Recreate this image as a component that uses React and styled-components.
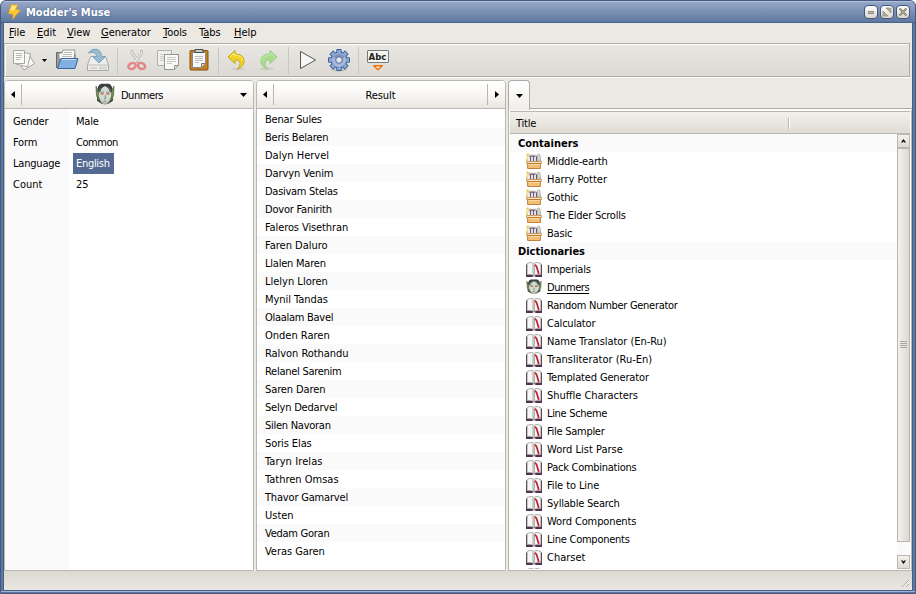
import React from 'react';
import styled, { createGlobalStyle, css } from 'styled-components';

const Global = createGlobalStyle`
  * { box-sizing: border-box; }
  html, body { margin: 0; padding: 0; overflow: hidden; background: #fff; }
  body { font-family: "DejaVu Sans Condensed", "DejaVu Sans", sans-serif; font-stretch: condensed; font-size: 11px; color: #000; cursor: default; }
  svg { display: block; flex: none; }
`;

const Window = styled.div`
  width: 916px; height: 594px; display: flex; flex-direction: column;
  border: 1px solid #465a80; border-radius: 6px 6px 0 0; overflow: hidden;
  background: #5f789f;
`;
const TitleBar = styled.header`
  height: 22px; flex: none; display: flex; align-items: center;
  padding: 0 5px 0 5px; border-top: 1px solid #b4c1da; border-bottom: 1px solid #46618b;
  background: linear-gradient(#96a6c7, #5e789f);
`;
const TitleText = styled.h1`
  flex: 1; margin: 2px 0 0 4px; font-size: 11px; line-height: 18px; font-weight: bold; color: #fff;
  text-shadow: 0 0 2px #435a82;
`;
const WindowButtons = styled.div`display: flex; gap: 2px;`;
const WindowButton = styled.button`
  width: 14px; height: 14px; padding: 0; display: grid; place-items: center;
  border: 1px solid #405780; border-radius: 4px; background: linear-gradient(#fff, #d8d5cd);
`;
const Client = styled.main`
  flex: 1; min-height: 0; margin: 0 3px; display: flex; flex-direction: column;
  background: #ece9e2; box-shadow: 0 0 0 1px #46618b;
`;
const Bottom = styled.div`height: 2px; flex: none; margin-top: 1px; background: linear-gradient(#9fb4d3 0 1px, #5a749c 1px);`;
const MenuBar = styled.nav`height: 20px; flex: none; display: flex; padding-left: 5px;`;
const MenuItem = styled.span`
  width: ${p => p.$w}px; line-height: 19px; white-space: nowrap; letter-spacing: -0.05px;
  u { text-underline-offset: 1px; text-decoration-thickness: 1px; }
`;
const ToolBar = styled.div`
  height: 34px; flex: none; display: flex; align-items: center; padding-left: 6px;
  border: 1px solid #aeaba4; border-left-color: #c8c5be; box-shadow: inset 1px 1px #fff, 0 1px #fff;
  margin-right: 2px; background: linear-gradient(#e9e7e2, #dddad4);
`;
const Tool = styled.div`width: ${p => p.$w || 31}px; height: 26px; flex: none; display: grid; place-items: center; opacity: ${p => (p.$dim ? 0.55 : 1)};`;
const Separator = styled.i`width: 1px; height: 27px; background: #cac7c0; margin: 0 ${p => p.$r ?? 3}px 0 4px;`;
const Workspace = styled.section`flex: 1; min-height: 0; margin-top: 3px; display: flex; gap: 2px;`;
const Panel = styled.section`
  width: 250px; display: flex; flex-direction: column; background: #fff;
  border: 1px solid #bab7b0; border-radius: 4px 4px 0 0; overflow: hidden;
`;
const PanelHeader = styled.header`
  height: 28px; flex: none; display: flex; align-items: center;
  border-bottom: 1px solid #bab7b0; background: linear-gradient(#fff, #fbfaf8 40%, #eae6e1);
`;
const ArrowCell = styled.div`
  width: ${p => p.$w || 17}px; height: 21px; display: grid; place-items: center;
  ${p => p.$side && css`border-${p.$side}: 1px solid #bab7b0;`}
`;
const HeaderTitle = styled.div`
  flex: 1; display: flex; align-items: center; justify-content: center; gap: 6px; line-height: 18px;
  padding-left: ${p => p.$pad || 0}px; letter-spacing: ${p => p.$ls || 0}px;
  span { padding-top: 2px; }
`;
const Properties = styled.dl`margin: 0; flex: 1; display: grid; grid-template: repeat(4, 21px) 1fr / 64px 1fr; align-items: stretch; padding-top: 2px; background: linear-gradient(90deg, #fafafa 64px, #fff 64px);`;
const Name = styled.dt`padding-left: 8px; line-height: 22px; letter-spacing: ${p => p.$ls || 0}px;`;
const Value = styled.dd`
  margin: 0 0 0 4px; padding: 0 3px; line-height: 22px; justify-self: start; letter-spacing: ${p => p.$ls || 0}px;
  ${p => p.$selected && css`background: #546a92; color: #fff; width: 41px;`}
`;
const List = styled.ul`margin: 0; padding: 1px 0 0; list-style: none; flex: 1;`;
const ResultRow = styled.li`height: 18px; line-height: 20px; padding-left: 8px; letter-spacing: ${p => p.$ls || 0}px; &:nth-child(even) { background: #fafafa; }`;
const RightPanel = styled.section`flex: 1; min-width: 0; display: flex; flex-direction: column;`;
const Tabs = styled.div`height: 30px; flex: none; display: flex;`;
const Tab = styled.div`
  width: 22px; height: 30px; display: grid; place-items: center; padding-top: 1px;
  border: 1px solid #aeaba4; border-bottom: 0; border-radius: 4px 4px 0 0; background: linear-gradient(#fff, #f0eeea);
`;
const TabLine = styled.div`flex: 1; height: 29px; border-bottom: 1px solid #aeaba4; box-shadow: 0 1px #fff;`;
const TreeFrame = styled.div`
  flex: 1; min-height: 0; display: flex; flex-direction: column; padding: 1px 1px 0 1px;
  border: solid #bab7b0; border-width: 0 1px 1px 1px; background: #fbfaf8;
`;
const TreeHeader = styled.header`
  height: 23px; flex: none; border: solid #bab7b0; border-width: 1px 0; padding: 1px 0 0 6px; line-height: 22px;
  background: linear-gradient(#f3f0eb, #e0dbd4); display: flex; align-items: center;
  span { width: 272px; padding-top: 2px; letter-spacing: -0.2px; }
  i { width: 2px; height: 11px; background: linear-gradient(90deg, #bab7b0 50%, #fff 50%); }
`;
const TreeBody = styled.div`flex: 1; min-height: 0; display: flex; background: #fff;`;
const Tree = styled.ul`flex: 1; margin: 0; padding: 0; list-style: none; overflow: hidden; height: 435px;`;
const Group = styled.li`height: 18px; line-height: 20px; padding-left: 8px; font-weight: bold; background: #fafafa;`;
const Item = styled.li`
  height: 18px; line-height: 18px; padding-left: 16px; display: flex; align-items: flex-start; gap: 5px; letter-spacing: ${p => p.$ls || 0}px;
  svg { margin-top: ${p => p.$top ?? 2}px; }
  span { line-height: 20px; text-decoration: ${p => (p.$active ? 'underline' : 'none')}; text-underline-offset: 2px; white-space: nowrap; }
`;
const ScrollBar = styled.div`width: 13px; height: 435px; display: flex; flex-direction: column; background: #fafafa;`;
const ScrollButton = styled.div`height: 14px; flex: none; border: 1px solid #bab7b0; display: grid; place-items: center; background: linear-gradient(#f4f1ed, #ded9d4);`;
const Thumb = styled.div`height: 394px; flex: none; border: 1px solid #bab7b0; display: grid; place-items: center; background: linear-gradient(90deg, #f4f1ed, #dcd8d2);`;
const Track = styled.div`flex: 1;`;
const Status = styled.footer`height: 19px; flex: none; display: flex; align-items: end; justify-content: end; padding: 0 3px 3px; background: linear-gradient(#dcd9d3, #eae7e1);`;

const Arrow = ({ dir }) => {
  const pts = { left: '4,0 0,3.5 4,7', right: '0,0 4,3.5 0,7', down: '0,0 7,0 3.5,4' }[dir];
  const down = dir === 'down';
  return <svg width={down ? 7 : 4} height={down ? 4 : 7}><polygon points={pts} /></svg>;
};

const Bolt = () => (
  <svg width="16" height="18" viewBox="0 0 16 18">
    <path d="M5 1.500 12 2 9.500 6.500 14.500 7 6.500 16.500 7.200 11.500 2.500 10.500Z" fill="#ffc72f" stroke="#e29a28" strokeWidth=".7" />
    <path d="M5.800 2.500 11 2.700 8.500 7 4 8Z" fill="#ffe57d" />
  </svg>
);
const Documents = () => (
  <svg width="24" height="24" viewBox="0 0 24 24">
    <g fill="#f8f8f6" stroke="#a5a5a2">
      <path d="m17 7 5.500 8.500L12 22 6 13Z" />
      <path d="m11 4 7.500 2-3 13L4 16Z" />
      <path d="M1.500 2.500h11v13h-11Z" />
    </g>
    <path d="M4 5.500h6M4 7.500h6M4 9.500h6M4 11.500h4" stroke="#bbb" />
  </svg>
);
const FolderOpen = () => (
  <svg width="24" height="24" viewBox="0 0 24 24">
    <path d="M1.500 20V4.500h5L8 6h12v13" fill="#989a96" stroke="#666965" />
    <path d="M4 5h3l1-3h12l-1 9H4Z" fill="#f8f8f6" stroke="#969693" />
    <path d="M9 4.500h8M8 6.500h9M7 8.500h10" stroke="#bbb" />
    <path d="M6 10.500h17L20 20.500H2.500Z" fill="#82afe0" stroke="#3868a4" />
    <path d="M7 11.500h14" stroke="#c7dcf2" />
  </svg>
);
const SaveDrive = () => (
  <svg width="24" height="24" viewBox="0 0 24 24">
    <path d="M4.500 8.500h15l3 8.500v5.500h-21V17Z" fill="#ededeb" stroke="#aaa9a6" />
    <path d="M2 17h20M4 20h7M14 18.500v3M16 18.500v3M18 18.500v3M20 18.500v3" stroke="#bcbcb9" />
    <path d="M2.500 5c3-5 13-6 13 3.500h4L13 15 6.500 8.500h4c0-4-3-5-8-3.500Z" fill="#99bbd1" stroke="#7ba0b9" />
  </svg>
);
const Scissors = () => (
  <svg width="22" height="22" viewBox="0 0 22 22" fill="none">
    <path d="M6 1v3l8 11M15.500 1v3L8 15" stroke="#9c9c99" strokeWidth="3" />
    <path d="M6 2v2l8 10M15.500 2v2L8 14" stroke="#f6f6f4" strokeWidth="1.200" />
    <ellipse cx="6" cy="17" rx="3.800" ry="2.800" stroke="#ea3c42" strokeWidth="2.400" transform="rotate(-25 6 17)" />
    <ellipse cx="15.500" cy="17" rx="3.800" ry="2.800" stroke="#ea3c42" strokeWidth="2.400" transform="rotate(25 15.500 17)" />
  </svg>
);
const Copy = () => (
  <svg width="24" height="24" viewBox="0 0 24 24">
    <path d="M1.500 2.500h14v15h-14Z" fill="#efefed" stroke="#b0b0ad" />
    <path d="M4 6.500h9M4 8.500h9M4 10.500h9M4 12.500h9" stroke="#ccc" />
    <path d="M8.500 6.500h14v11l-4 4h-10Z" fill="#fafaf9" stroke="#93938f" />
    <path d="M11 9.500h9M11 11.500h9M11 13.500h9M11 15.500h5" stroke="#c5c5c2" /><path d="m18.500 21v-3.500H22" fill="#ddd" stroke="#93938f" />
  </svg>
);
const Paste = () => (
  <svg width="22" height="24" viewBox="0 0 22 24">
    <rect x="2" y="2.500" width="18" height="19.500" rx="1" fill="#c38125" stroke="#845215" />
    <path d="M4.500 4.500h13v11l-4 4h-9Z" fill="#fafafa" stroke="#888" />
    <path d="M7 1.500h8v3H7Z" fill="#ccc" stroke="#44494a" />
    <path d="M7 8.500h8M7 10.500h8M7 12.500h8M7 14.500h4" stroke="#bbb" />
    <path d="M13.500 19v-3.500H17" fill="#ddd" stroke="#777" />
  </svg>
);
const Undo = ({ redo }) => (
  <svg width="22" height="22" viewBox="0 0 22 22">
    <g transform={redo ? 'translate(22 0) scale(-1 1)' : undefined}>
      <ellipse cx="12" cy="20" rx="7" ry="1.500" fill="#777" opacity=".16" />
      <path d="M9 1.500 2 8 9 14.500V11c5-1 7 4 2.500 9C20.500 17 21 5 9 5Z" fill={redo ? '#a9de8c' : '#f0d323'} stroke={redo ? '#92ce86' : '#c4a51a'} />
      <path d="M4 8 8 4v2c5 0 9 2 9 6" fill="none" stroke={redo ? '#c2ecad' : '#fff083'} />
    </g>
  </svg>
);
const Play = () => (
  <svg width="18" height="20" viewBox="0 0 18 20"><path d="M1.500 1.500 16.500 10l-15 8.500Z" fill="#f7f7f6" stroke="#555753" /></svg>
);
const teeth = [0, 45, 90, 135, 180, 225, 270, 315];
const Gear = () => (
  <svg width="24" height="24" viewBox="0 0 24 24">
    <ellipse cx="12" cy="21.500" rx="8" ry="2" fill="#555" opacity=".2" />
    <g fill="#8ea5d0" stroke="#35609f">
      {teeth.map(a => <path key={a} d="M9.800 5V1.500h4.400V5" transform={`rotate(${a} 12 12)`} />)}
      <circle cx="12" cy="12" r="8" />
    </g>
    {teeth.map(a => <path key={a} d="M10.300 5.500V2h3.400v3.500" fill="#8ea5d0" transform={`rotate(${a} 12 12)`} />)}
    <circle cx="12" cy="12" r="6" fill="#a9b3d8" stroke="#bac3e0" />
    <path d="M6 9q6-7 12 0L12 12Z" fill="#657ba9" opacity=".6" />
    <circle cx="12" cy="12" r="3.300" fill="#e5e5e4" stroke="#456da6" />
  </svg>
);
const AbcLabel = styled.div`
  width: 22px; height: 13px; border: 1px solid #787a76; border-radius: 1px; background: #f4f4f2;
  color: #222; font: bold 9.500px/11px "DejaVu Sans Condensed", "DejaVu Sans", sans-serif; font-stretch: condensed; text-align: center;
`;
const AbcIcon = styled.div`display: flex; flex-direction: column; align-items: center; gap: 2px;`;
const Abc = () => (
  <AbcIcon><AbcLabel>Abc</AbcLabel><svg width="10" height="6"><path d="M.8.800h8.400L5 4.800Z" fill="#fff1d8" stroke="#eb7411" strokeWidth="1.400" /></svg></AbcIcon>
);
const Face = ({ size = 20, h = 23 }) => (
  <svg width={size} height={h} viewBox="0 0 20 22" preserveAspectRatio="none">
    <path d="M2 17C3 9 1 3 6 .700h8C19 3 17 9 18 17l-5 3H7Z" fill="#393d40" />
    <path d="M1 3 4 9v9L1.500 12ZM19 3l-3 6v9l2.500-6Z" fill="#768b54" stroke="#456331" strokeWidth=".7" />
    <path d="M10 2.500C5 4 3.500 7 3.800 12c.5 4 3 8 6.200 9 3.200-1 5.700-5 6.200-9 .3-5-1.200-8-6.200-9.500Z" fill="#d2dbcf" />
    <path d="M4 15c1 3 3 5.500 6 6 3-.5 5-3 6-6l-4 3.500H8Z" fill="#94a28d" opacity=".6" />
    <path d="M10 2.500Q5.500 4 4.500 9M10 2.500Q14.500 4 15.500 9" stroke="#393d40" fill="none" />
    <path d="M5.500 8.800q2-.6 3.500.2M11 9q1.500-.8 3.500-.2" stroke="#798275" strokeWidth=".8" fill="none" />
    <path d="M5.700 10.300h2.800M11.500 10.300h2.800" stroke="#c84a43" strokeWidth="1.200" />
    <path d="M10.300 11.500V15H9M8.300 17.500q1.700-.8 3.400 0" fill="none" stroke="#6f806b" strokeWidth=".8" />
  </svg>
);
const Book = () => (
  <svg width="16" height="15" viewBox="0 0 16 15">
    <path d="M0 2.500h1v10H0ZM15 2.500h1v10h-1ZM0 12.500h16V15h-6l-2-1-2 1H0Z" fill="#513154" />
    <path d="M1.200 1.500Q3 .5 6 .5L8 1.500l2-1q3 0 4.800 1v11q-4.500-.5-6.800 1-2.300-1.500-6.800-1Z" fill="#f7f7f6" stroke="#9b9a97" strokeWidth=".8" />
    <path d="M6 1h1.500l.7 1v11.500L6 12Z" fill="#d0d0ce" /><path d="M8.300 2v11" stroke="#8d8c89" strokeWidth=".8" />
    <path d="M9 2.800q2 1.200 2.300 4.200l1.500 5" fill="none" stroke="#c01d2b" strokeWidth="1.700" />
  </svg>
);
const Box = () => (
  <svg width="16" height="16" viewBox="0 0 16 16">
    <path d="M1 8.500 3 2h10l2 6.500Z" fill="#fbf8f1" stroke="#cdbda8" strokeWidth=".6" />
    <path d="M4.500 8V3.200M7.500 8V3.200M10.500 3.200V8M3.500 3.200h6" fill="none" stroke="#6b5877" strokeWidth="1.300" />
    <path d="M1.800 0v4M0 2h3.600M1 4l-.5 4" stroke="#e5cf55" strokeWidth="1.100" />
    <path d="M11.500 8V2q1.500-2.500 2.500 0l.5 6Z" fill="#d7d7d7" stroke="#a2a2a0" strokeWidth=".7" />
    <path d="M.6 8.500h14.800v2H.6Z" fill="#fae5c0" stroke="#c99353" strokeWidth=".9" />
    <path d="M1.600 10.500h12.800v5H1.600Z" fill="#f1bf75" stroke="#b8782f" strokeWidth=".9" />
    <path d="M2.500 11.500h11" stroke="#fbd99f" />
  </svg>
);

const menus = [['F', 'ile', '', 28], ['E', 'dit', '', 30], ['V', 'iew', '', 34], ['G', 'enerator', '', 62], ['T', 'ools', '', 36], ['a', 'bs', 'T', 35], ['H', 'elp', '', 30]];
const names = [
  ['Benar Sules', -0.2], ['Beris Belaren', -0.2], ['Dalyn Hervel', 0], ['Darvyn Venim', -0.1], ['Dasivam Stelas', -0.28],
  ['Dovor Fanirith', -0.2], ['Faleros Visethran', -0.1], ['Faren Daluro', 0], ['Llalen Maren', -0.22], ['Llelyn Lloren', 0],
  ['Mynil Tandas', -0.05], ['Olaalam Bavel', -0.28], ['Onden Raren', 0], ['Ralvon Rothandu', -0.05], ['Relanel Sarenim', -0.27],
  ['Saren Daren', -0.1], ['Selyn Dedarvel', -0.2], ['Silen Navoran', -0.26], ['Soris Elas', -0.1], ['Taryn Irelas', 0.1],
  ['Tathren Omsas', 0], ['Thavor Gamarvel', -0.18], ['Usten', 0], ['Vedam Goran', -0.26], ['Veras Garen', -0.05],
];
const containers = [['Middle-earth', -0.17], ['Harry Potter', 0], ['Gothic', -0.15], ['The Elder Scrolls', -0.22], ['Basic', -0.2]];
const dictionaries = [
  ['Imperials', -0.24], ['Dunmers', -0.42], ['Random Number Generator', -0.29], ['Calculator', -0.2], ['Name Translator (En-Ru)', -0.05],
  ['Transliterator (Ru-En)', 0], ['Templated Generator', -0.15], ['Shuffle Characters', -0.05], ['Line Scheme', -0.32],
  ['File Sampler', -0.28], ['Word List Parse', 0], ['Pack Combinations', -0.27], ['File to Line', -0.1], ['Syllable Search', -0.22],
  ['Word Components', -0.12], ['Line Components', -0.25], ['Charset', 0],
];

export default function App() {
  return (
    <>
      <Global />
      <Window>
        <TitleBar>
          <Bolt /><TitleText>Modder's Muse</TitleText>
          <WindowButtons>
            <WindowButton aria-label="Minimize"><svg width="8" height="8"><path d="M1.500 3.500h5v2h-5Z" fill="#c7c2b3" stroke="#8c8673" /></svg></WindowButton>
            <WindowButton aria-label="Maximize"><svg width="10" height="10"><path d="M4 1h5v5ZM1 4v5h5Z" fill="#b7b29f" stroke="#8c8673" strokeWidth=".7" /></svg></WindowButton>
            <WindowButton aria-label="Close"><svg width="10" height="10"><path d="m1.500 1.500 7 7m0-7-7 7" stroke="#8c8673" strokeWidth="2.300" /><path d="m2 2 6 6m0-6-6 6" stroke="#bbb6a7" strokeWidth=".7" /></svg></WindowButton>
          </WindowButtons>
        </TitleBar>
        <Client>
          <MenuBar>{menus.map(([u, rest, before, w]) => <MenuItem key={rest} $w={w}>{before}<u>{u}</u>{rest}</MenuItem>)}</MenuBar>
          <ToolBar>
            <Tool $w={26}><Documents /></Tool><Tool $w={15}><svg width="5" height="3"><path d="M0 0h5L2.500 3Z" /></svg></Tool>
            <Tool $w={30}><FolderOpen /></Tool><Tool><SaveDrive /></Tool><Separator />
            <Tool $dim><Scissors /></Tool><Tool><Copy /></Tool><Tool><Paste /></Tool><Separator $r={2} />
            <Tool><Undo /></Tool><Tool $w={32}><Undo redo /></Tool><Separator />
            <Tool><Play /></Tool><Tool><Gear /></Tool><Separator />
            <Tool><Abc /></Tool>
          </ToolBar>
          <Workspace>
            <Panel>
              <PanelHeader>
                <ArrowCell $side="right"><Arrow dir="left" /></ArrowCell>
                <HeaderTitle $ls={-0.42} $pad={2}><Face /><span>Dunmers</span></HeaderTitle>
                <ArrowCell $w={19}><Arrow dir="down" /></ArrowCell>
              </PanelHeader>
              <Properties>
                <Name $ls={-0.2}>Gender</Name><Value $ls={-0.2}>Male</Value>
                <Name $ls={-0.2}>Form</Name><Value $ls={-0.45}>Common</Value>
                <Name $ls={-0.2}>Language</Name><Value $selected $ls={-0.3}>English</Value>
                <Name>Count</Name><Value $ls={-0.1}>25</Value>
              </Properties>
            </Panel>
            <Panel>
              <PanelHeader>
                <ArrowCell $side="right"><Arrow dir="left" /></ArrowCell>
                <HeaderTitle $ls={-0.1}><span>Result</span></HeaderTitle>
                <ArrowCell $side="left" $w={18}><Arrow dir="right" /></ArrowCell>
              </PanelHeader>
              <List>{names.map(([n, ls]) => <ResultRow key={n} $ls={ls}>{n}</ResultRow>)}</List>
            </Panel>
            <RightPanel>
              <Tabs><Tab><Arrow dir="down" /></Tab><TabLine /></Tabs>
              <TreeFrame>
                <TreeHeader><span>Title</span><i /></TreeHeader>
                <TreeBody>
                  <Tree>
                    <Group>Containers</Group>
                    {containers.map(([n, ls]) => <Item key={n} $ls={ls} $top={1}><Box /><span>{n}</span></Item>)}
                    <Group>Dictionaries</Group>
                    {dictionaries.map(([n, ls]) => {
                      const active = n === 'Dunmers';
                      return <Item key={n} $ls={ls} $active={active} $top={active ? 1 : 2}>{active ? <Face size={16} h={16} /> : <Book />}<span>{n}</span></Item>;
                    })}
                    <Item><Book /></Item>
                  </Tree>
                  <ScrollBar>
                    <ScrollButton><svg width="5" height="4"><path d="M0 3.500 2.500 0 5 3.500H3.500L2.500 2.500l-1 1Z" /></svg></ScrollButton>
                    <Thumb><svg width="7" height="8"><path d="M0 .500h7M0 2.500h7M0 4.500h7M0 6.500h7" stroke="#aaa79f" /></svg></Thumb>
                    <Track />
                    <ScrollButton><svg width="5" height="4"><path d="M0 .500 2.500 4 5 .500H3.500L2.500 1.500l-1-1Z" /></svg></ScrollButton>
                  </ScrollBar>
                </TreeBody>
              </TreeFrame>
            </RightPanel>
          </Workspace>
          <Status><svg width="8" height="8"><path d="m1 8 7-7M5 8l3-3" stroke="#aaa79f" /><path d="m2 8 6-6M6 8l2-2" stroke="#fff" strokeWidth=".7" /></svg></Status>
        </Client>
        <Bottom />
      </Window>
    </>
  );
}
